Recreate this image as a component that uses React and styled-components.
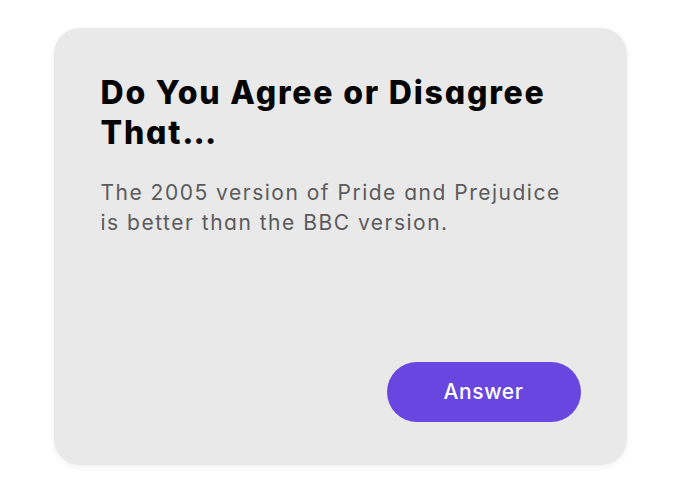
import React from "react";
import styled, { createGlobalStyle } from "styled-components";

const Global = createGlobalStyle`
  html, body { margin: 0; padding: 0; background: #ffffff; }
  body { font-family: Inter, "Noto Sans", sans-serif; font-feature-settings: "cv11" 1; }
  #root { width: 100vw; height: 100vh; display: flex; align-items: center; justify-content: center; }
`;

const Card = styled.div`
  box-sizing: border-box;
  width: 573px;
  height: 437px;
  background: #e9e9ea;
  border-radius: 26px;
  box-shadow: 0 2px 6px rgba(0, 0, 0, 0.06);
  padding: 45px 46px 43px 47px;
  display: flex;
  flex-direction: column;
`;

const Title = styled.h2`
  margin: 0;
  font-family: Inter, "Noto Sans", sans-serif;
  font-feature-settings: "cv11" 1;
  font-weight: 800;
  font-size: 32px;
  line-height: 40px;
  color: #050505;
  letter-spacing: 1.8px;
`;

const Dots = styled.span`
  letter-spacing: 0;
`;

const Body = styled.p`
  margin: 25px 0 0;
  font-family: Inter, "Noto Sans", sans-serif;
  font-feature-settings: "cv11" 1;
  font-weight: 400;
  font-size: 21px;
  line-height: 30px;
  color: #5b5b5b;
  letter-spacing: 1.5px;
`;

const Footer = styled.div`
  margin-top: auto;
  display: flex;
  justify-content: flex-end;
`;

const Button = styled.button`
  width: 194px;
  height: 60px;
  border: none;
  border-radius: 30px;
  background: #6846df;
  color: #ffffff;
  font-family: Inter, "Noto Sans", sans-serif;
  font-feature-settings: "cv11" 1;
  font-weight: 500;
  font-size: 21px;
  letter-spacing: 0.6px;
  cursor: pointer;
`;

export default function App() {
  return (
    <>
      <Global />
      <Card>
        <Title>
          Do You Agree or Disagree
          <br />
          That<Dots>...</Dots>
        </Title>
        <Body>
          The 2005 version of Pride and Prejudice
          <br />
          is better than the BBC version.
        </Body>
        <Footer>
          <Button>Answer</Button>
        </Footer>
      </Card>
    </>
  );
}
